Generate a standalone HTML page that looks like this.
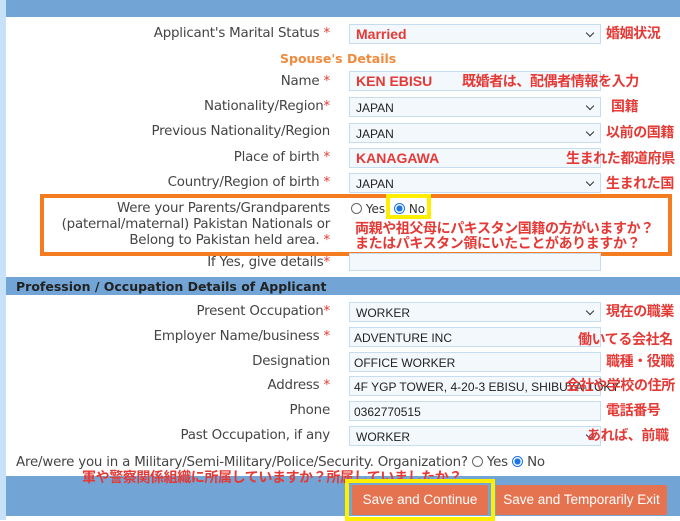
<!DOCTYPE html>
<html><head><meta charset="utf-8"><style>
*{margin:0;padding:0;box-sizing:border-box}
body{width:680px;height:520px;position:relative;background:#fff;font-family:"DejaVu Sans","Liberation Sans","Noto Sans CJK JP",sans-serif;overflow:hidden;color:#333}
.a{position:absolute}
.lbl{position:absolute;right:350px;font-size:13.4px;color:#444;white-space:nowrap;text-align:right;letter-spacing:-0.2px;margin-top:2px}
.s{color:#e53935}
.in{position:absolute;left:349px;width:252px;height:20px;background:#f3f8fd;border:1px solid #c6dcf0;font-family:"Liberation Sans",sans-serif;font-size:12px;color:#222;padding:3px 0 0 6px;white-space:nowrap;overflow:visible}
.in.sel:after{content:"";position:absolute;right:7px;top:5px;width:5px;height:5px;border-right:1.6px solid #333;border-bottom:1.6px solid #333;transform:rotate(45deg)}
.big{font-weight:bold;color:#e53935;font-size:14px;padding-top:1px}
.jp{position:absolute;color:#e53935;font-family:"Noto Sans CJK JP",sans-serif;font-weight:bold;font-size:14px;white-space:nowrap;letter-spacing:-0.4px}
.rad{display:inline-block;width:11px;height:11px;border:1px solid #666;border-radius:50%;vertical-align:-1px;background:#fff}
.rad.on{border:1.5px solid #1a73e8;background:radial-gradient(circle,#1a73e8 0 2.8px,#fff 3.3px)}
.btn{position:absolute;background:#e57350;color:#fff;font-family:"Liberation Sans",sans-serif;font-size:13.5px;text-align:center;line-height:30px;border-radius:2px}
</style></head><body>
<div class="a" style="left:0;top:0;width:6px;height:520px;background:#c8e1fa"></div>
<div class="a" style="left:6px;top:0;width:674px;height:17px;background:#72a5d5"></div>

<div class="lbl" style="top:24px">Applicant's Marital Status <span class="s">*</span></div>
<div class="in sel big" style="top:24px">Married</div>
<div class="jp" style="left:606px;top:23px">婚姻状況</div>

<div class="a" style="left:280px;top:51px;font-size:12.5px;font-weight:bold;color:#f08a3c">Spouse's Details</div>

<div class="lbl" style="top:72px">Name <span class="s">*</span></div>
<div class="in big" style="top:71px">KEN EBISU</div>
<div class="jp" style="left:462px;top:71px">既婚者は、配偶者情報を入力</div>

<div class="lbl" style="top:97px">Nationality/Region<span class="s">*</span></div>
<div class="in sel" style="top:97px">JAPAN</div>
<div class="jp" style="left:611px;top:96px">国籍</div>

<div class="lbl" style="top:122px">Previous Nationality/Region</div>
<div class="in sel" style="top:123px">JAPAN</div>
<div class="jp" style="left:606px;top:122px">以前の国籍</div>

<div class="lbl" style="top:148px">Place of birth <span class="s">*</span></div>
<div class="in big" style="top:148px">KANAGAWA</div>
<div class="jp" style="left:566px;top:148px">生まれた都道府県</div>

<div class="lbl" style="top:173px">Country/Region of birth <span class="s">*</span></div>
<div class="in sel" style="top:173px">JAPAN</div>
<div class="jp" style="left:606px;top:173px">生まれた国</div>

<div class="a" style="left:40px;top:194px;width:632px;height:62px;border:4px solid #f47b20"></div>
<div class="lbl" style="top:199px;line-height:16px">Were your Parents/Grandparents<br>(paternal/maternal) Pakistan Nationals or<br>Belong to Pakistan held area. <span class="s">*</span></div>
<div class="a" style="left:351px;top:202px;font-size:12px"><span class="rad"></span> Yes</div>
<div class="a" style="left:386px;top:194px;width:45px;height:25px;border:4px solid #ffee00"></div>
<div class="a" style="left:394px;top:202px;font-size:12px"><span class="rad on"></span> No</div>
<div class="jp" style="left:355px;top:218px">両親や祖父母にパキスタン国籍の方がいますか？</div>
<div class="jp" style="left:355px;top:233px">またはパキスタン領にいたことがありますか？</div>

<div class="lbl" style="top:253px">If Yes, give details<span class="s">*</span></div>
<div class="in" style="top:253px;height:18px"></div>

<div class="a" style="left:6px;top:277px;width:674px;height:18px;background:#72a5d5;font-size:12.5px;font-weight:bold;color:#222;padding:2px 0 0 10px">Profession / Occupation Details of Applicant</div>

<div class="lbl" style="top:302px">Present Occupation<span class="s">*</span></div>
<div class="in sel" style="top:302px">WORKER</div>
<div class="jp" style="left:606px;top:301px">現在の職業</div>

<div class="lbl" style="top:327px">Employer Name/business <span class="s">*</span></div>
<div class="in" style="top:327px;padding-left:4px">ADVENTURE INC</div>
<div class="jp" style="left:578px;top:329px">働いてる会社名</div>

<div class="lbl" style="top:352px">Designation</div>
<div class="in" style="top:352px;padding-left:4px">OFFICE WORKER</div>
<div class="jp" style="left:606px;top:351px">職種・役職</div>

<div class="lbl" style="top:376px">Address <span class="s">*</span></div>
<div class="in" style="top:376px;padding-left:4px">4F YGP TOWER, 4-20-3 EBISU, SHIBUYA-TOKY</div>
<div class="jp" style="left:566px;top:375px">会社や学校の住所</div>

<div class="lbl" style="top:401px">Phone</div>
<div class="in" style="top:401px;padding-left:4px">0362770515</div>
<div class="jp" style="left:606px;top:400px">電話番号</div>

<div class="lbl" style="top:426px">Past Occupation, if any</div>
<div class="in sel" style="top:426px">WORKER</div>
<div class="jp" style="left:587px;top:425px">あれば、前職</div>

<div class="a" style="left:16px;top:455px;font-size:13.4px;color:#444;white-space:nowrap;letter-spacing:-0.2px">Are/were you in a Military/Semi-Military/Police/Security. Organization? <span class="rad"></span> Yes <span class="rad on"></span> No</div>

<div class="a" style="left:6px;top:476px;width:674px;height:40px;background:#72a5d5"></div>
<div class="jp" style="left:82px;top:467px">軍や警察関係組織に所属していますか？所属していましたか？</div>
<div class="btn" style="left:352px;top:485px;width:136px;height:30px">Save and Continue</div>
<div class="a" style="left:345px;top:479px;width:150px;height:42px;border:4px solid #ffee00"></div>
<div class="btn" style="left:496px;top:485px;width:171px;height:30px">Save and Temporarily Exit</div>
</body></html>
